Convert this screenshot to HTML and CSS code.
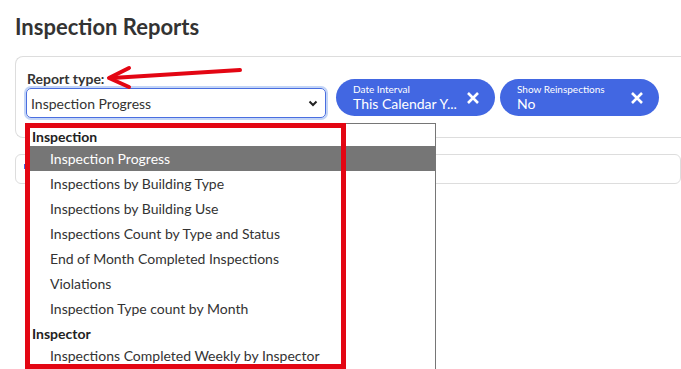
FILE: index.html
```html
<!DOCTYPE html>
<html lang="en">
<head>
  <meta charset="UTF-8" />
  <meta name="viewport" content="width=device-width, initial-scale=1.0"/>
  <title>Inspection Reports</title>
  <link rel="stylesheet" href="styles.css">
</head>
<body>

  <h1>Inspection Reports</h1>

  <div class="filter-card">
    <div class="field">
      <label for="reportType">Report type:</label>
      <div class="select-box">
        <span>Inspection Progress</span>
        <svg width="12" height="12" viewBox="0 0 12 12"><path d="M2.5 4.5 L6 8 L9.5 4.5" fill="none" stroke="#222" stroke-width="2"/></svg>
      </div>
    </div>

    <div class="chip">
      <div class="chip-text">
        <div class="chip-label">Date Interval</div>
        <div class="chip-value">This Calendar Y...</div>
      </div>
      <svg class="chip-close" width="14" height="14" viewBox="0 0 14 14"><path d="M2 2 L12 12 M12 2 L2 12" stroke="white" stroke-width="2.6"/></svg>
    </div>

    <div class="chip">
      <div class="chip-text">
        <div class="chip-label">Show Reinspections</div>
        <div class="chip-value">No</div>
      </div>
      <svg class="chip-close" width="14" height="14" viewBox="0 0 14 14"><path d="M2 2 L12 12 M12 2 L2 12" stroke="white" stroke-width="2.6"/></svg>
    </div>
  </div>

  <div class="results-card">
    <span class="results-tab"></span>
  </div>

  <!-- open dropdown of the select -->
  <div class="dropdown">
    <div class="group">Inspection</div>
    <div class="option selected">Inspection Progress</div>
    <div class="option">Inspections by Building Type</div>
    <div class="option">Inspections by Building Use</div>
    <div class="option">Inspections Count by Type and Status</div>
    <div class="option">End of Month Completed Inspections</div>
    <div class="option">Violations</div>
    <div class="option">Inspection Type count by Month</div>
    <div class="group">Inspector</div>
    <div class="option">Inspections Completed Weekly by Inspector</div>
  </div>

  <!-- annotations -->
  <div class="highlight-box"></div>
  <svg class="arrow" width="150" height="30" viewBox="0 0 150 30">
    <path d="M140 5 L12 13" stroke="#e30613" stroke-width="4" stroke-linecap="round" fill="none"/>
    <path d="M29 3 L9 13 L29 22" stroke="#e30613" stroke-width="4" stroke-linecap="round" stroke-linejoin="round" fill="none"/>
  </svg>

</body>
</html>
```

FILE: styles.css
```css
body {
  margin: 0;
  padding: 0 0 0 15px;
  font-family: Lato, "Open Sans", sans-serif;
  background: white;
  color: #333;
  overflow: hidden;
}

h1 {
  margin: 0;
  padding-top: 14px;
  font-size: 22px;
  font-weight: bold;
  color: #333;
  line-height: 26px;
}

.filter-card {
  display: flex;
  align-items: center;
  gap: 5px;
  margin-top: 16px;
  margin-right: -20px;
  padding: 13px 10px 19px 10px;
  border: 1px solid #ddd;
  border-right: none;
  border-radius: 8px 0 0 8px;
}

.field {
  display: flex;
  flex-direction: column;
  margin-right: 5px;
}

.field label {
  font-size: 14px;
  font-weight: bold;
  color: #333;
  padding-left: 1px;
  line-height: 18px;
}

.select-box {
  display: flex;
  align-items: center;
  justify-content: space-between;
  width: 300px;
  height: 30px;
  box-sizing: border-box;
  padding: 0 6px 0 4px;
  border: 1px solid #4a6ee0;
  border-radius: 5px;
  box-shadow: 0 0 0 2px #c3d5f7;
  font-size: 14px;
  color: #333;
}

.chip {
  display: flex;
  align-items: center;
  justify-content: space-between;
  width: 159px;
  height: 37px;
  margin-top: 7px;
  box-sizing: border-box;
  padding: 0 15px 0 17px;
  background: #4267e2;
  border-radius: 19px;
  color: white;
}

.chip-label {
  font-size: 10px;
  line-height: 11px;
}

.chip-value {
  font-size: 14px;
  line-height: 17px;
}

.results-card {
  margin-top: 16px;
  height: 28px;
  border: 1px solid #ddd;
  border-radius: 6px;
  position: relative;
}

.results-tab {
  position: absolute;
  left: 8px;
  top: 9px;
  width: 4px;
  height: 5px;
  background: #4267e2;
}

.dropdown {
  position: absolute;
  left: 25px;
  top: 123px;
  width: 411px;
  height: 260px;
  box-sizing: border-box;
  border: 1px solid #767676;
  background: white;
  font-size: 14px;
  color: #333;
}

.group {
  height: 22px;
  line-height: 25px;
  padding-left: 6px;
  font-weight: bold;
  color: #222;
}

.option {
  height: 25px;
  line-height: 25px;
  padding-left: 24px;
}

.option.selected {
  background: #767676;
  color: white;
}

.highlight-box {
  position: absolute;
  left: 25px;
  top: 123px;
  width: 321px;
  height: 246px;
  box-sizing: border-box;
  border: 5px solid #e30613;
}

.arrow {
  position: absolute;
  left: 100px;
  top: 65px;
}
```
